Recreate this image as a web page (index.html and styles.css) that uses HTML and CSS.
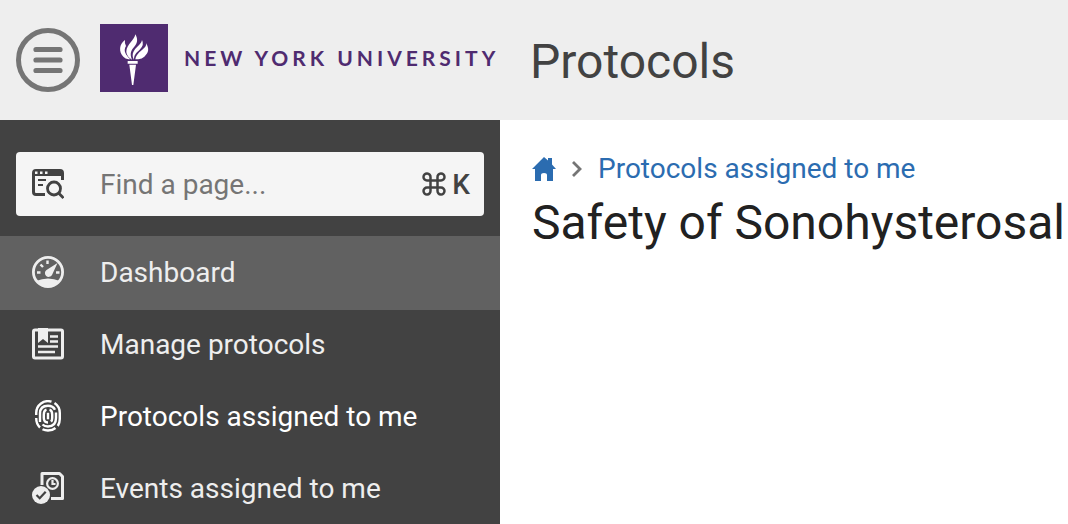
FILE: index.html
```html
<!DOCTYPE html>
<html lang="en">
<head>
<meta charset="utf-8">
<meta name="viewport" content="width=device-width, initial-scale=1">
<title>Protocols</title>
<link rel="stylesheet" href="styles.css">
</head>
<body>
<header class="topbar">
  <div class="brand">
    <button class="menu-button" type="button" aria-label="Menu">
      <svg viewBox="0 0 64 64"><circle cx="32" cy="32" r="29.500" stroke-width="5"/><path d="M20 21.500h24M20 32h24M20 42.500h24" stroke-width="5.200" stroke-linecap="round"/></svg>
    </button>
    <a class="logo" href="#">
      <svg class="torch" viewBox="0 0 204 204" aria-hidden="true">
        <path fill="#4f2b70" d="M0 0h204v204H0z"/>
        <path fill="#fff" d="M75 48C57 60 56 84 70 98Q76 105 85 106H91C77 93 69 80 78 66Q73 58 75 48z"/>
        <path fill="#fff" d="M106 31C104 48 80 61 79 82C79 94 88 103 96 107C88 87 94 79 104 67C114 55 113 43 106 31z"/>
        <path fill="#fff" d="M126 48C124 64 96 74 98 96Q99 103 102 107C102 92 108 87 119 77Q134 63 126 48z"/>
        <path fill="#fff" d="M138 57C143 74 111 80 106 106H115Q126 104 133 98C147 85 148 74 138 57z"/>
        <path fill="#fff" d="M83 111h30v8H83zM88 122h20L100 183h-4z"/>
      </svg>
      <span class="wordmark">NEW YORK UNIVERSITY</span>
    </a>
  </div>
  <div class="app-title">Protocols</div>
</header>
<div class="body">
  <aside class="sidebar">
    <label class="search">
      <svg class="icon" viewBox="0 0 32 32" aria-hidden="true">
        <path fill="currentColor" d="M4 1h24a4 4 0 0 1 4 4v7h-3V8H3v16a1 1 0 0 0 1 1h9v3H4a4 4 0 0 1-4-4V5a4 4 0 0 1 4-4zM6 11h8v2H6zM6 16h5v2H6z"/>
        <path fill="#f5f5f5" d="M3 3.500h2.500V6H3zM8 3.500h2.500V6H8zM13 3.500h2.500V6H13z"/>
        <g fill="none" stroke="currentColor" stroke-width="2.800"><circle cx="22" cy="20.500" r="6.500"/><path d="M26.500 25l5 5"/></g>
      </svg>
      <input class="search-input" type="text" placeholder="Find a page..." aria-label="Find a page">
      <span class="shortcut">
        <svg class="command" viewBox="0 0 24 24" role="img" aria-label="Command"><path fill="none" stroke="currentColor" stroke-width="2.500" d="M8.500 8.500h7v7h-7zM8.500 8.500V5.200a3.500 3.500 0 1 0-3.500 3.300zM15.500 8.500V5.200a3.500 3.500 0 1 1 3.500 3.300zM15.500 15.500v3.300a3.500 3.500 0 1 0 3.500-3.300zM8.500 15.500v3.300a3.500 3.500 0 1 1-3.500-3.300z"/></svg>
        <kbd class="key">K</kbd>
      </span>
    </label>
    <nav class="nav">
      <a class="nav-item selected" href="#">
        <svg class="icon" viewBox="0 0 32 32" aria-hidden="true"><circle cx="16" cy="16" r="14.600" fill="none" stroke="currentColor" stroke-width="2.800"/><path fill="currentColor" d="M4 25q12-5 24 0Q23 31 16 31T4 25zM25.500 7l-5.500 12a3.800 3.800 0 1 1-5.500-5z"/><path stroke="currentColor" stroke-width="2.400" d="M5 16.500h3.500M24 16.500h3.500M8.500 8.500l2.500 2.500M15.500 4.500v3.500"/></svg>
        <span class="nav-label">Dashboard</span>
      </a>
      <a class="nav-item" href="#">
        <svg class="icon" viewBox="0 0 32 32" aria-hidden="true"><path fill="none" stroke="currentColor" stroke-width="3" d="M6 2H3a1.500 1.500 0 0 0-1.500 1.500v25A1.500 1.500 0 0 0 3 30h26a1.500 1.500 0 0 0 1.500-1.500v-25A1.500 1.500 0 0 0 29 2H16"/><path fill="currentColor" d="M6 0h10v15l-5-4-5 4z"/><path stroke="currentColor" stroke-width="2.500" d="M18 8.500h8M18 13.500h8M6 18.500h20M6 24h17"/></svg>
        <span class="nav-label">Manage protocols</span>
      </a>
      <a class="nav-item current" href="#" aria-current="page">
        <svg class="icon" viewBox="0 0 32 32" aria-hidden="true"><g fill="none" stroke="currentColor" stroke-width="2.400"><path d="M4.200 15V13A11.800 11.800 0 0 1 19.500 1.700M22.500 3Q27.800 6.500 27.800 13v6q0 4-2 7M23.500 28Q20.500 30.500 16 30.500q-3 0-5.500-1.300M8 27.500Q4.200 24 4.200 18"/><path d="M8 22V13.500Q8 5.700 16 5.700q5 0 7 4M24 12.500V18q0 8.500-8 8.500-3.500 0-5.500-2"/><path d="M14.500 9.700Q11.800 10.500 11.800 14.500V18q0 4.500 4.200 4.500M17.500 9.700q2.700.8 2.700 4.800V18q0 2.500-1.200 3.700"/><path d="M16 12.800v6.500"/></g></svg>
        <span class="nav-label">Protocols assigned to me</span>
      </a>
      <a class="nav-item" href="#">
        <svg class="icon" viewBox="0 0 32 32" aria-hidden="true"><path fill="none" stroke="currentColor" stroke-width="3" stroke-linejoin="round" d="M10 13V1.500h17.500l3 3V26.500H19"/><g fill="none" stroke="currentColor" stroke-width="2.200"><circle cx="20.500" cy="11.500" r="5.400"/><path d="M20.500 8v4h3"/></g><circle cx="9" cy="23" r="9" fill="currentColor"/><path fill="none" stroke="#424242" stroke-width="2.200" d="M4.500 23l3.200 3.200 6-6.500"/></svg>
        <span class="nav-label">Events assigned to me</span>
      </a>
    </nav>
  </aside>
  <main class="content">
    <nav class="breadcrumb" aria-label="Breadcrumb">
      <a class="home" href="#" aria-label="Home"><svg viewBox="0 0 24 24"><path fill="currentColor" d="M12 0l4 3.600V1h4v6.500l4 4.500h-3v12h-6v-6q0-2-3-2t-3 2v6H3V12H0z"/></svg></a>
      <svg class="chevron" viewBox="0 0 10 16" aria-hidden="true"><path fill="none" stroke="currentColor" stroke-width="2.800" d="M1 1l7 7-7 7"/></svg>
      <a href="#">Protocols assigned to me</a>
    </nav>
    <h1 class="page-title">Safety of Sonohysterosal</h1>
  </main>
</div>
</body>
</html>
```

FILE: styles.css
```css
* { box-sizing: border-box; }

body {
  margin: 0;
  min-height: 100vh;
  display: flex;
  flex-direction: column;
  background: #fff;
  color: #212121;
  font-family: Roboto, "Liberation Sans", sans-serif;
  font-size: 28px;
  line-height: 32px;
}

a { color: inherit; text-decoration: none; }
svg { display: block; flex: none; }

.topbar {
  display: flex;
  align-items: center;
  min-height: 120px;
  background: #eee;
  color: #424242;
}

.brand {
  flex: none;
  width: 500px;
  padding-left: 16px;
  display: flex;
  align-items: center;
  gap: 20px;
}

.menu-button {
  flex: none;
  width: 64px;
  height: 64px;
  padding: 0;
  border: 0;
  background: none;
  color: #757575;
}
.menu-button svg { fill: none; stroke: currentColor; }

.logo {
  display: flex;
  align-items: center;
  gap: 16px;
  padding-bottom: 4px;
}
.torch { width: 68px; height: 68px; }

.wordmark {
  color: #4f2b70;
  font-family: Lato, sans-serif;
  font-size: 21px;
  font-weight: 700;
  letter-spacing: 4px;
  white-space: nowrap;
}

.app-title {
  padding: 4px 0 0 30px;
  font-size: 48px;
  line-height: 56px;
}

.body { flex: 1; display: flex; }

.sidebar {
  flex: none;
  width: 500px;
  padding-top: 32px;
  background: #424242;
  color: #eee;
}

.search {
  display: flex;
  align-items: center;
  height: 64px;
  margin: 0 16px 20px;
  padding: 0 14px 0 16px;
  border-radius: 4px;
  background: #f5f5f5;
  color: #424242;
}
.icon { width: 32px; height: 32px; margin-right: 36px; }

.search-input {
  flex: 1;
  min-width: 0;
  padding: 2px 0 0;
  border: 0;
  outline: 0;
  background: none;
  color: #424242;
  font: inherit;
}
.search-input::placeholder { color: #757575; opacity: 1; }

.shortcut { display: flex; align-items: center; gap: 6px; }
.command { width: 24px; height: 24px; }
.key { padding-top: 2px; font: inherit; font-weight: 500; }

.nav-item {
  display: flex;
  align-items: center;
  height: 72px;
  padding: 0 32px;
}
.nav-label { padding-top: 2px; }
.selected { background: #616161; box-shadow: 0 2px #616161; }
.current { color: #fff; }

.content {
  flex: 1;
  min-width: 0;
  padding: 33px 0 0 32px;
  overflow: hidden;
}

.breadcrumb {
  display: flex;
  align-items: center;
  gap: 16px;
  color: #2b6cb0;
}
.home svg { width: 24px; height: 24px; }
.chevron { width: 10px; height: 16px; color: #757575; }

.page-title {
  margin: 10px 0 0;
  font-size: 48px;
  font-weight: 400;
  line-height: 56px;
  white-space: nowrap;
}
```
